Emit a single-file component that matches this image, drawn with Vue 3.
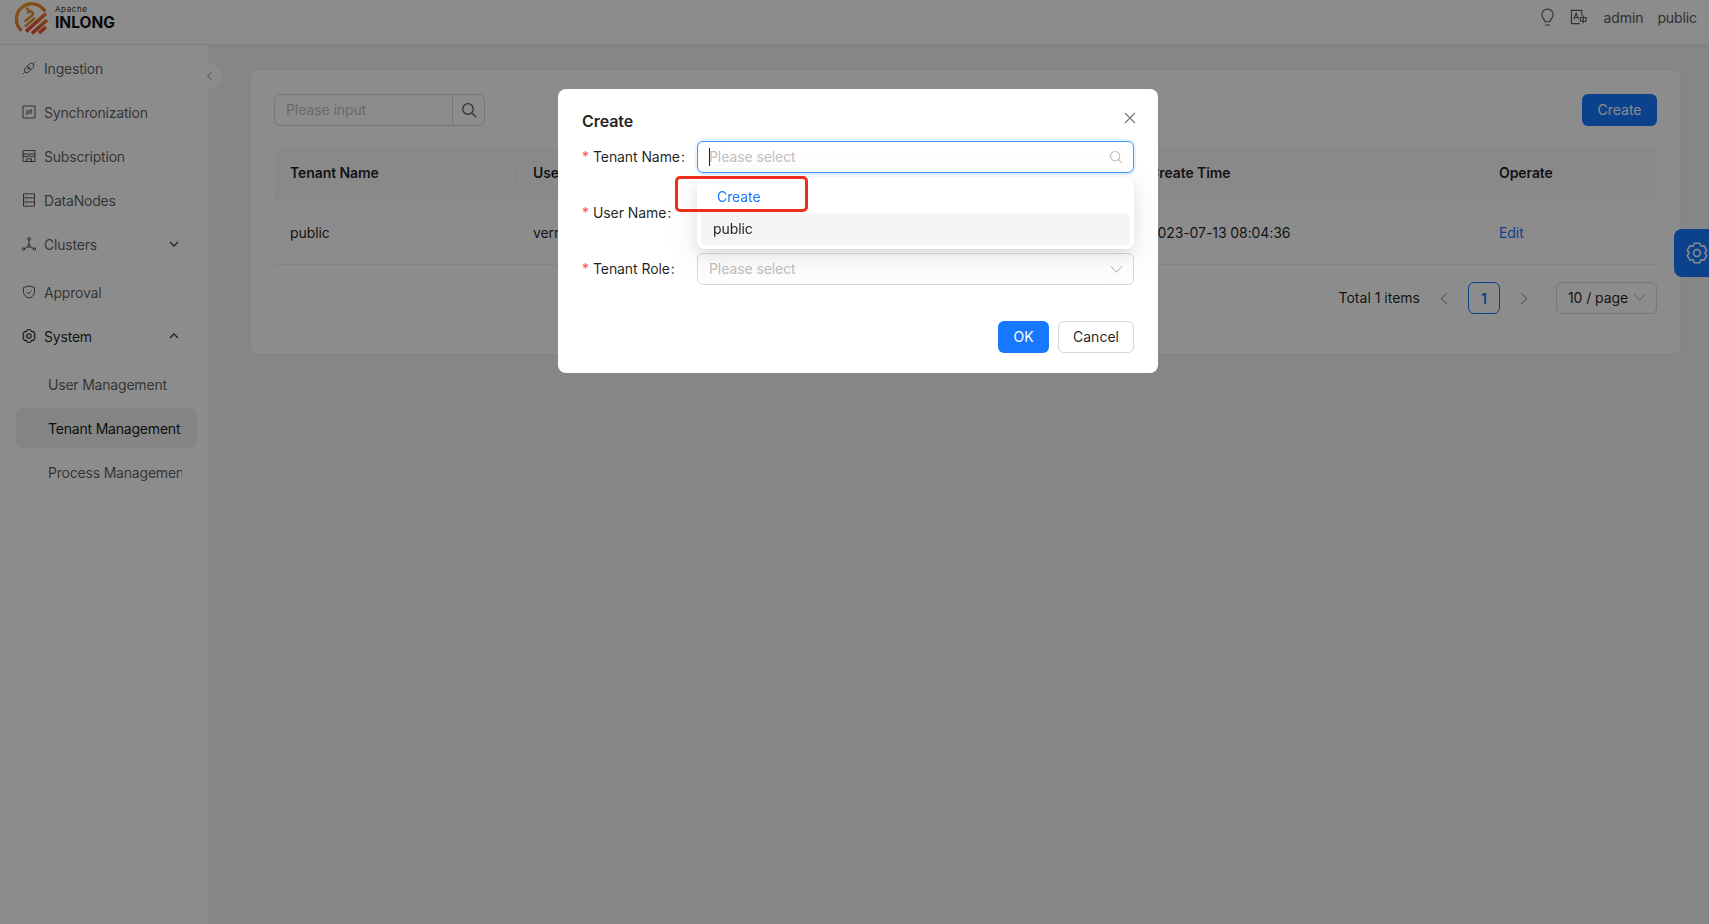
<script setup>
const menu = [
  { key: 'ingestion', label: 'Ingestion' },
  { key: 'sync', label: 'Synchronization' },
  { key: 'sub', label: 'Subscription' },
  { key: 'nodes', label: 'DataNodes' },
]

function gearPath(cx, cy, outer, inner) {
  const pts = []
  for (let i = 0; i < 6; i++) {
    const a = (Math.PI / 3) * i - Math.PI / 2
    const w = 0.27
    const at = (r, t) => `${(cx + r * Math.cos(t)).toFixed(2)} ${(cy + r * Math.sin(t)).toFixed(2)}`
    pts.push(at(outer, a - w), at(outer, a + w), at(inner, a + w + 0.2), at(inner, a + Math.PI / 3 - w - 0.2))
  }
  return 'M' + pts.join('L') + 'Z'
}
const gear = gearPath(12, 12, 11, 8.8)
</script>

<template>
  <div class="page">
    <header class="topbar">
      <div class="logo">
        <svg class="logo-mark" viewBox="0 0 34 36" width="34" height="36">
          <defs>
            <linearGradient id="ring" x1="0" y1="0" x2="1" y2="1">
              <stop offset="0" stop-color="#f2a62a" />
              <stop offset="0.6" stop-color="#ea7a2a" />
              <stop offset="1" stop-color="#e2522b" />
            </linearGradient>
            <linearGradient id="stripe" x1="0" y1="1" x2="1" y2="0">
              <stop offset="0" stop-color="#e0402c" />
              <stop offset="1" stop-color="#ee7b2c" />
            </linearGradient>
          </defs>
          <path d="M7.500 30.500A15.300 15.300 0 1 1 31 11.500" fill="none" stroke="url(#ring)" stroke-width="3.400" />
          <path d="M12 31.500 32 13.500M18 33.500 33 20M25 33 32 27" fill="none" stroke="url(#stripe)" stroke-width="3.600" />
          <path d="M10.500 21.500 18 15.500C20 13.500 18 10.500 15.500 11.500L13 13M12.500 7.500 15.500 11.500M11 26.500 21 18" fill="none" stroke="#e9902c" stroke-width="2.500" />
        </svg>
        <div class="logo-text">
          <span class="logo-apache">Apache</span>
          <span class="logo-name">INLONG</span>
        </div>
      </div>
      <div class="top-actions">
        <svg class="ico-bulb" viewBox="0 0 16 20" width="15" height="19" fill="none" stroke="currentColor" stroke-width="1.200">
          <path d="M5.500 14.500C5 12 2 10.500 2 7a6 6 0 0 1 12 0c0 3.500-3 5-3.500 7.500ZM5.500 18h5" />
        </svg>
        <svg class="ico-lang" viewBox="0 0 18 18" width="17" height="17" fill="none" stroke="currentColor" stroke-width="1.200">
          <path d="M10.500 15.500H1.500v-14h11V7M4 11 6.500 4.500 9 11M5 9h3M11 9h6v4h-6zM14 7v8" />
        </svg>
        <span class="top-user">admin</span>
        <span class="top-tenant">public</span>
      </div>
    </header>

    <div class="body">
      <aside class="sidebar">
        <nav class="menu">
          <div v-for="m in menu" :key="m.key" class="item">
            <svg class="mi" viewBox="0 0 14 14" fill="none" stroke="currentColor" stroke-width="1">
              <template v-if="m.key === 'ingestion'">
                <path d="M.8 13.200 2.600 11.400M13.200.8 11.400 2.600M5 5.500 3 7.500a2.400 2.400 0 0 0 3.500 3.500L8.500 9ZM5.500 5 9 8.500l2-2a2.400 2.400 0 0 0-3.500-3.500ZM5.500 8.500 7 7" />
              </template>
              <template v-else-if="m.key === 'sync'">
                <path d="M1 1h12v12H1zM4 6h6L8.500 4.200M10 8H4L5.500 9.800" />
              </template>
              <template v-else-if="m.key === 'sub'">
                <path d="M1 1.500h12v11H1zM1 5h12M1 6.800 4 7.800 7 6.800 10 7.800 13 6.800M4.500 12.500V9.800h5v2.700" />
              </template>
              <template v-else>
                <path d="M1.500.8h11v12.400h-11zM1.500 4.900h11M1.500 9h11M3.500 2.900h.8M3.500 7h.8M3.500 11.100h.8" />
              </template>
            </svg>
            <span>{{ m.label }}</span>
          </div>
          <div class="item">
            <svg class="mi" viewBox="0 0 14 14" fill="none" stroke="currentColor" stroke-width="1">
              <circle cx="7" cy="2" r="1.300" /><circle cx="1.600" cy="12" r="1.200" /><circle cx="12.400" cy="12" r="1.200" />
              <circle cx="7" cy="9" r="1.300" />
              <path d="M7 3.300v4.400M2.700 11.300 5.900 9.700M11.300 11.300 8.100 9.700" />
            </svg>
            <span>Clusters</span>
            <svg class="chev" viewBox="0 0 10 10" fill="none" stroke="currentColor" stroke-width="1.300"><path d="M1 3l4 4 4-4" /></svg>
          </div>
          <div class="item spaced">
            <svg class="mi" viewBox="0 0 14 14" fill="none" stroke="currentColor" stroke-width="1">
              <path d="M7 .8 12.500 2.600V7c0 3-2.500 5.200-5.500 6.200C4 12.200 1.500 10 1.500 7V2.600ZM4.500 7 6.500 9 9.500 5.500" />
            </svg>
            <span>Approval</span>
          </div>
          <div class="item open">
            <svg class="mi" viewBox="0 0 24 24" fill="none" stroke="currentColor" stroke-width="1.800" stroke-linejoin="round">
              <path :d="gear" /><circle cx="12" cy="12" r="3.800" />
            </svg>
            <span>System</span>
            <svg class="chev" viewBox="0 0 10 10" fill="none" stroke="currentColor" stroke-width="1.300"><path d="M1 7l4-4 4 4" /></svg>
          </div>
          <div class="sub">
            <div class="item child">User Management</div>
            <div class="item child active">Tenant Management</div>
            <div class="item child"><span class="clip">Process Management</span></div>
          </div>
        </nav>
        <button class="collapse" type="button" aria-label="Collapse">
          <svg viewBox="0 0 10 12" width="8" height="10" fill="none" stroke="currentColor" stroke-width="1.200"><path d="M7 1 2 6l5 5" /></svg>
        </button>
      </aside>

      <main class="main">
        <section class="card">
          <div class="toolbar">
            <div class="search">
              <span class="search-input">Please input</span>
              <span class="search-btn">
                <svg viewBox="0 0 16 16" width="16" height="16" fill="none" stroke="currentColor" stroke-width="1.300"><circle cx="7" cy="7" r="5.300" /><path d="M11 11l4 4" /></svg>
              </span>
            </div>
            <button class="primary" type="button">Create</button>
          </div>

          <div class="table">
            <div class="row head">
              <div class="cell">Tenant Name</div>
              <div class="cell">User Name</div>
              <div class="cell">Tenant Role</div>
              <div class="cell">Create Time</div>
              <div class="cell">Operate</div>
            </div>
            <div class="row">
              <div class="cell">public</div>
              <div class="cell">verr</div>
              <div class="cell"></div>
              <div class="cell">2023-07-13 08:04:36</div>
              <div class="cell link">Edit</div>
            </div>
          </div>

          <div class="pager">
            <span class="total">Total 1 items</span>
            <svg class="arrow" viewBox="0 0 10 12" fill="none" stroke="currentColor" stroke-width="1"><path d="M7.500 1 2.500 6l5 5" /></svg>
            <span class="page-no">1</span>
            <svg class="arrow" viewBox="0 0 10 12" fill="none" stroke="currentColor" stroke-width="1"><path d="M2.500 1l5 5-5 5" /></svg>
            <span class="size">10 / page
              <svg viewBox="0 0 14 10" width="13" height="9" fill="none" stroke="#a8a8a8" stroke-width="1.100"><path d="M1 1.500 7 8l6-6.500" /></svg>
            </span>
          </div>
        </section>
      </main>
    </div>

    <button class="settings-tab" type="button" aria-label="Settings">
      <svg viewBox="0 0 24 24" width="22" height="22" fill="none" stroke="#fff" stroke-width="1.600" stroke-linejoin="round">
        <path :d="gear" /><circle cx="12" cy="12" r="3.800" />
      </svg>
    </button>

    <div class="mask">
      <div class="modal">
        <h2 class="modal-title">Create</h2>
        <svg class="close" viewBox="0 0 12 12" width="12" height="12" fill="none" stroke="#757575" stroke-width="1.100"><path d="M1 1l10 10M11 1 1 11" /></svg>

        <div class="form-row">
          <label class="label"><i>*</i>Tenant Name<b>:</b></label>
          <div class="control focused">
            <span class="caret"></span>
            <span class="ph">Please select</span>
            <svg viewBox="0 0 16 16" width="14" height="14" fill="none" stroke="#bfbfbf" stroke-width="1.300"><circle cx="7" cy="7" r="5.300" /><path d="M11 11l4 4" /></svg>
          </div>

          <div class="dropdown">
            <div class="dd-create">Create</div>
            <div class="dd-option">public</div>
          </div>
          <div class="callout"></div>
        </div>

        <div class="form-row">
          <label class="label"><i>*</i>User Name<b>:</b></label>
          <div class="control"></div>
        </div>

        <div class="form-row">
          <label class="label"><i>*</i>Tenant Role<b>:</b></label>
          <div class="control">
            <span class="ph">Please select</span>
            <svg viewBox="0 0 14 10" width="13" height="9" fill="none" stroke="#a8a8a8" stroke-width="1.100"><path d="M1 1.500 7 8l6-6.500" /></svg>
          </div>
        </div>

        <div class="footer">
          <button class="ok" type="button">OK</button>
          <button class="cancel" type="button">Cancel</button>
        </div>
      </div>
    </div>
  </div>
</template>

<style>
html, body { margin: 0; background: #f5f5f5; }
</style>

<style scoped>
.page {
  height: 924px;
  overflow: hidden;
  display: flex;
  flex-direction: column;
  font-family: Inter, "Liberation Sans", sans-serif;
  font-size: 14px;
  letter-spacing: -0.08px;
  color: rgba(0, 0, 0, 0.88);
  background: #f5f5f5;
}
.topbar {
  height: 44px;
  flex: none;
  display: flex;
  align-items: center;
  justify-content: space-between;
  padding: 0 12px 0 14px;
  background: #fff;
  border-bottom: 1px solid #e9e9e9;
}
.logo { display: flex; align-items: center; gap: 7px; margin-top: -9px; }
.logo-mark { flex: none; }
.logo-text { display: flex; flex-direction: column; line-height: 1; }
.logo-apache { font-size: 8px; letter-spacing: 0.6px; color: #333; }
.logo-name { font-size: 15.500px; font-weight: 700; color: #111; margin-top: 2px; letter-spacing: 0; }
.top-actions { display: flex; align-items: center; color: #595959; margin-top: -10px; }
.ico-bulb { margin-right: 15px; }
.ico-lang { margin-right: 16px; }
.top-user { margin-right: 14px; }
.top-tenant { letter-spacing: -0.1px; }

.body { flex: 1; display: flex; min-height: 0; }
.sidebar {
  position: relative;
  width: 209px;
  flex: none;
  background: #fff;
  border-right: 1px solid #e9e9e9;
}
.menu { display: flex; flex-direction: column; gap: 4px; padding: 3px 12px 0 16px; letter-spacing: -0.2px; }
.item {
  height: 40px;
  display: flex;
  align-items: center;
  gap: 8px;
  padding-left: 8px;
  border-radius: 8px;
  color: rgba(0, 0, 0, 0.65);
}
.item.spaced { margin-top: 4px; }
.item.open { color: rgba(0, 0, 0, 0.88); }
.mi { width: 14px; height: 14px; flex: none; margin-left: -2px; }
.chev { width: 10px; height: 10px; margin-left: auto; margin-right: 18px; color: rgba(0, 0, 0, 0.75); }
.sub { display: flex; flex-direction: column; gap: 4px; margin-top: 4px; }
.child { padding-left: 32px; }
.child.active { background: rgba(0, 0, 0, 0.06); color: rgba(0, 0, 0, 0.92); }
.clip { width: 134px; overflow: hidden; white-space: nowrap; }
.collapse {
  position: absolute;
  top: 19px;
  right: -13px;
  width: 24px;
  height: 24px;
  padding: 0;
  border: 0;
  border-radius: 50%;
  background: #fff;
  color: #8c8c8c;
  display: flex;
  align-items: center;
  justify-content: center;
}

.main { flex: 1; min-width: 0; padding: 24px 28px 0 40px; }
.card {
  background: #fff;
  border: 1px solid #eeeeee;
  border-radius: 8px;
  padding: 24px 23px 40px;
}
.toolbar { display: flex; justify-content: space-between; align-items: center; }
.search {
  width: 211px;
  height: 32px;
  box-sizing: border-box;
  display: flex;
  border: 1px solid #d9d9d9;
  border-radius: 6px;
}
.search-input { flex: 1; padding-left: 11px; line-height: 29px; color: #bfbfbf; }
.search-btn {
  width: 31px;
  display: flex;
  align-items: center;
  justify-content: center;
  border-left: 1px solid #d9d9d9;
  color: #595959;
}
.primary {
  width: 75px;
  height: 32px;
  padding: 0 0 1px;
  border: 0;
  border-radius: 6px;
  background: #1677ff;
  color: #fff;
  font: inherit;
}
.table { margin-top: 21px; }
.row {
  display: grid;
  grid-template-columns: 243px 308px 308px 350px 174px;
  height: 65px;
  box-sizing: border-box;
  border-bottom: 1px solid #f0f0f0;
}
.row.head {
  height: 53px;
  background: #fafafa;
  border-radius: 8px 8px 0 0;
  font-weight: 600;
}
.cell { position: relative; display: flex; align-items: center; padding-left: 16px; }
.head .cell { padding-bottom: 1px; }
.head .cell:not(:last-child)::after {
  content: "";
  position: absolute;
  right: 0;
  top: 15px;
  bottom: 15px;
  width: 1px;
  background: #f0f0f0;
}
.link { color: #1677ff; }
.pager { display: flex; align-items: center; justify-content: flex-end; margin-top: 17px; height: 32px; }
.total { margin-right: 8px; letter-spacing: 0; padding-bottom: 2px; }
.arrow { width: 12px; height: 13px; color: #a8a8a8; margin: 0 10px; }
.page-no {
  width: 32px;
  height: 32px;
  box-sizing: border-box;
  margin: 0 8px 0 8px;
  border: 1px solid #1677ff;
  border-radius: 6px;
  color: #1677ff;
  font-weight: 600;
  display: flex;
  align-items: center;
  justify-content: center;
}
.size {
  width: 101px;
  height: 32px;
  box-sizing: border-box;
  margin-left: 16px;
  padding: 0 10px 1px 11px;
  border: 1px solid #d9d9d9;
  border-radius: 6px;
  display: flex;
  align-items: center;
  justify-content: space-between;
}

.settings-tab {
  position: fixed;
  left: 1674px;
  top: 229px;
  width: 48px;
  height: 48px;
  padding: 0 0 0 12px;
  border: 0;
  border-radius: 8px 0 0 8px;
  background: #1677ff;
  display: flex;
  align-items: center;
}

.mask {
  position: fixed;
  inset: 0;
  background: rgba(0, 0, 0, 0.45);
  padding: 89px 0 0 558px;
}
.modal {
  position: relative;
  width: 600px;
  box-sizing: border-box;
  padding: 21px 24px 20px;
  background: #fff;
  border-radius: 8px;
}
.modal-title {
  margin: 0 0 9px;
  font-size: 16px;
  line-height: 22px;
  font-weight: 600;
}
.close { position: absolute; right: 22px; top: 23px; }
.form-row { position: relative; display: flex; align-items: center; height: 32px; margin-bottom: 24px; }
.label { width: 115px; flex: none; white-space: nowrap; padding-bottom: 1px; }
.label i { font-style: normal; color: #ff4d4f; margin-right: 4px; }
.label b { font-weight: 400; margin-left: 1px; }
.control {
  flex: 1;
  height: 32px;
  box-sizing: border-box;
  padding: 0 10px 0 11px;
  display: flex;
  align-items: center;
  border: 1px solid #d9d9d9;
  border-radius: 6px;
  background: #fff;
}
.control svg { margin-left: auto; }
.control.focused { border-color: #4096ff; box-shadow: 0 0 0 2px rgba(5, 145, 255, 0.1); }
.caret { width: 1px; height: 18px; background: #222; margin-right: -1px; }
.ph { color: #bfbfbf; padding-bottom: 1px; }
.dropdown {
  position: absolute;
  z-index: 2;
  left: 115px;
  right: 0;
  top: 36px;
  height: 72px;
  box-sizing: border-box;
  padding: 4px;
  background: #fff;
  border-radius: 8px;
  box-shadow: 0 6px 16px rgba(0, 0, 0, 0.08), 0 3px 6px -4px rgba(0, 0, 0, 0.12), 0 9px 28px 8px rgba(0, 0, 0, 0.05);
}
.dd-create { height: 32px; padding-left: 16px; line-height: 32px; color: #1677ff; }
.dd-option {
  height: 32px;
  padding-left: 12px;
  line-height: 32px;
  border-radius: 4px;
  background: #f5f5f5;
}
.callout {
  position: absolute;
  z-index: 3;
  left: 93px;
  top: 34.500px;
  width: 133px;
  height: 36px;
  box-sizing: border-box;
  border: 3px solid #f02d1a;
  border-radius: 5px;
  pointer-events: none;
}
.footer { display: flex; justify-content: flex-end; gap: 9px; margin-top: 36px; }
.ok, .cancel { height: 32px; border-radius: 6px; font: inherit; padding: 0 0 1px; }
.ok { width: 51px; border: 0; background: #1677ff; color: #fff; }
.cancel { width: 76px; border: 1px solid #d9d9d9; background: #fff; color: rgba(0, 0, 0, 0.88); }
</style>
